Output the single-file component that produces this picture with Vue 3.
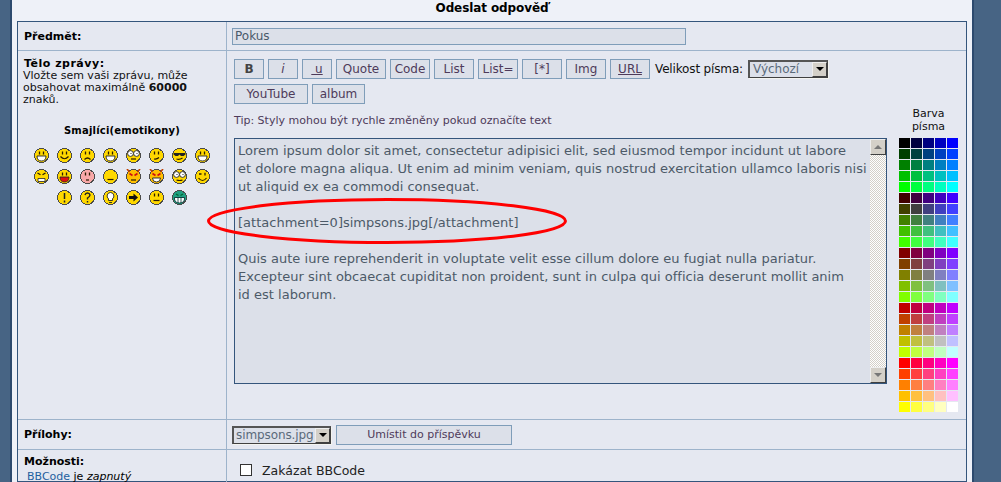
<script setup>
const smileys = [
  [{ f: '#ffd800', k: 'grin' }, { f: '#ffd800', k: 'smile' }, { f: '#ffd800', k: 'sad' }, { f: '#ffd800', k: 'open' }, { f: '#ffd800', k: 'roll' }, { f: '#ffd800', k: 'neutral' }, { f: '#ffd800', k: 'cool' }, { f: '#ffd800', k: 'laugh' }],
  [{ f: '#ffd800', k: 'mad' }, { f: '#ffd800', k: 'tongue' }, { f: '#f8a8a8', k: 'blush' }, { f: '#ffd800', k: 'meh' }, { f: '#ffc000', k: 'evil' }, { f: '#ffc000', k: 'evilgrin' }, { f: '#ffd800', k: 'geek' }, { f: '#ffd800', k: 'wink' }],
  [{ f: '#ffd800', k: 'excl' }, { f: '#ffd800', k: 'q' }, { f: '#ffd800', k: 'idea' }, { f: '#ffd800', k: 'arrow' }, { f: '#ffd800', k: 'flat' }, { f: '#1f9f80', k: 'green' }]
]
const eyes = ['grin', 'smile', 'sad', 'open', 'neutral', 'laugh', 'tongue', 'blush', 'flat']
const mouths = {
  smile: 'M3.500 8.500q4 4.500 8 0', sad: 'M4.500 11.500q3-3 6 0', neutral: 'M5 11q3 .500 5-1.500', meh: 'M4.500 10.500h6',
  flat: 'M4.500 10.500h6', roll: 'M5 11h5', cool: 'M4.500 11q3 1 6-1', wink: 'M3.500 9q4 5 8 0', blush: 'M6 11h3', geek: 'M4.500 11q3 1 6 0'
}
const palette = [
  ['#000000','#000040','#000080','#0000c0','#0000ff'],
  ['#004000','#004040','#004080','#0040c0','#0040ff'],
  ['#008000','#008040','#008080','#0080c0','#0080ff'],
  ['#00c000','#00c040','#00c080','#00c0c0','#00c0ff'],
  ['#00ff00','#00ff40','#00ff80','#00ffc0','#00ffff'],
  ['#400000','#400040','#400080','#4000c0','#4000ff'],
  ['#404000','#404040','#404080','#4040c0','#4040ff'],
  ['#408000','#408040','#408080','#4080c0','#4080ff'],
  ['#40c000','#40c040','#40c080','#40c0c0','#40c0ff'],
  ['#40ff00','#40ff40','#40ff80','#40ffc0','#40ffff'],
  ['#800000','#800040','#800080','#8000c0','#8000ff'],
  ['#804000','#804040','#804080','#8040c0','#8040ff'],
  ['#808000','#808040','#808080','#8080c0','#8080ff'],
  ['#80c000','#80c040','#80c080','#80c0c0','#80c0ff'],
  ['#80ff00','#80ff40','#80ff80','#80ffc0','#80ffff'],
  ['#c00000','#c00040','#c00080','#c000c0','#c000ff'],
  ['#c04000','#c04040','#c04080','#c040c0','#c040ff'],
  ['#c08000','#c08040','#c08080','#c080c0','#c080ff'],
  ['#c0c000','#c0c040','#c0c080','#c0c0c0','#c0c0ff'],
  ['#c0ff00','#c0ff40','#c0ff80','#c0ffc0','#c0ffff'],
  ['#ff0000','#ff0040','#ff0080','#ff00c0','#ff00ff'],
  ['#ff4000','#ff4040','#ff4080','#ff40c0','#ff40ff'],
  ['#ff8000','#ff8040','#ff8080','#ff80c0','#ff80ff'],
  ['#ffc000','#ffc040','#ffc080','#ffc0c0','#ffc0ff'],
  ['#ffff00','#ffff40','#ffff80','#ffffc0','#ffffff']
]
const row1 = [
  { t: 'B', c: 'bold w30' }, { t: 'i', c: 'ital w30' }, { t: '\u00a0u', c: 'und w30' },
  { t: 'Quote', c: 'w50' }, { t: 'Code', c: 'w40' }, { t: 'List', c: 'w40' },
  { t: 'List=', c: 'w40' }, { t: '[*]', c: 'w40' }, { t: 'Img', c: 'w40' }, { t: 'URL', c: 'und w40' }
]
</script>

<template>
  <div class="page">
    <div class="frame">
      <div class="heading">Odeslat odpověď</div>
      <div class="tbl">
        <div class="left subj"><b>Předmět:</b></div>
        <div class="right subj"><div class="subject-input">Pokus</div></div>

        <div class="left body-l">
          <div class="lbl wide"><b>Tělo zprávy:</b></div>
          <div class="hint">Vložte sem vaši zprávu, může<br>obsahovat maximálně <b>60000</b><br>znaků.</div>
          <div class="smile-title">Smajlíci(emotikony)</div>
          <div class="smiles">
            <div v-for="(r, i) in smileys" :key="i" class="smile-row">
              <svg v-for="s in r" :key="s.k" class="smile" viewBox="0 0 15 15" width="15" height="15">
                <circle cx="7.500" cy="7.500" r="7" :fill="s.f" stroke="#4a4a4a" stroke-width="1" shape-rendering="crispEdges" />
                <path v-if="eyes.includes(s.k)" d="M5.500 3.500v3M9.500 3.500v3" stroke="#2a1c00" stroke-width="1.300" fill="none" />
                <path v-if="mouths[s.k]" :d="mouths[s.k]" stroke="#2a1c00" stroke-width="1.200" fill="none" />
                <path v-if="s.k === 'grin' || s.k === 'open' || s.k === 'laugh'" d="M3 8h9q0 5-4.500 5T3 8z" fill="#fff" stroke="#222" stroke-width=".9" />
                <path v-if="s.k === 'tongue'" d="M3 8h9q0 5-4.500 5T3 8z" fill="#e01010" stroke="#222" stroke-width=".8" />
                <g v-if="s.k === 'mad'">
                  <path d="M3.500 4l3 1.800M11.500 4l-3 1.800" stroke="#2a1c00" stroke-width="1.300" />
                  <path d="M4 9.500h7v3H4z" fill="#fff" stroke="#222" stroke-width=".8" />
                </g>
                <g v-if="s.k === 'roll' || s.k === 'geek'">
                  <circle cx="4.500" cy="5.500" r="2.900" fill="#fff" stroke="#222" stroke-width=".9" />
                  <circle cx="10.500" cy="5.500" r="2.900" fill="#fff" stroke="#222" stroke-width=".9" />
                  <path d="M4.500 5.500h1M10.500 5.500h1" stroke="#222" stroke-width="1.200" />
                </g>
                <path v-if="s.k === 'cool'" d="M1.500 5h12v1.500l-2 1.500H9L7.500 6.500 6 8H3.500l-2-1.500z" fill="#222" />
                <path v-if="s.k === 'wink'" d="M4 5h2.500M10 3.800v2.700" stroke="#2a1c00" stroke-width="1.300" />
                <path v-if="s.k === 'evil' || s.k === 'evilgrin'" d="M1 0l2.500 3M14 0l-2.500 3" stroke="#c04000" stroke-width="1.600" />
                <path v-if="s.k === 'evil' || s.k === 'evilgrin'" d="M3.500 4.500l3 2M11.500 4.500l-3 2" stroke="#d01010" stroke-width="1.700" />
                <path v-if="s.k === 'evil'" d="M5 11h5" stroke="#2a1c00" stroke-width="1.200" />
                <path v-if="s.k === 'evilgrin'" d="M3.500 9h8q0 4-4 4t-4-4z" fill="#fff" stroke="#222" stroke-width=".9" />
                <path v-if="s.k === 'excl'" d="M7.500 3v6M7.500 10.500v2" stroke="#222" stroke-width="1.500" />
                <path v-if="s.k === 'q'" d="M5 5q.500-2 2.500-2t2.500 2q0 1.500-2.500 3v1.500M7.500 11v1.500" stroke="#222" stroke-width="1.400" fill="none" />
                <path v-if="s.k === 'idea'" d="M7.500 2.500a3.500 3.500 0 0 1 2 6.300v1.700h-4V8.800a3.500 3.500 0 0 1 2-6.300zM6 12.500h3" fill="#fff" stroke="#222" stroke-width=".9" />
                <path v-if="s.k === 'arrow'" d="M3 6h4.500V3.500l4.500 4-4.500 4V9H3z" fill="#111" />
                <g v-if="s.k === 'green'">
                  <path d="M4 4l2.500 1.500M11 4L8.500 5.500" stroke="#063" stroke-width="1.300" />
                  <path d="M2.500 7.500h10q.5 5.500-5 5.500t-5-5.500z" fill="#fff" stroke="#033" stroke-width=".9" />
                  <path d="M6 7.500V12.800M9 7.500V12.800" stroke="#033" stroke-width=".8" />
                </g>
              </svg>
            </div>
          </div>
        </div>

        <div class="right body-r">
          <div class="editor-top">
            <div class="toolbar">
              <div class="tb-row">
                <button v-for="b in row1" :key="b.t" class="btn" :class="b.c">{{ b.t }}</button>
                <span class="size-label">Velikost písma:</span>
                <div class="select size-sel"><span class="sel-text">Výchozí</span><span class="sel-arrow"><i></i></span></div>
              </div>
              <div class="tb-row second">
                <button class="btn w74">YouTube</button>
                <button class="btn w53">album</button>
              </div>
              <div class="tip">Tip: Styly mohou být rychle změněny pokud označíte text</div>
            </div>
          </div>
          <div class="editor-main">
            <div class="textarea">
              <div class="ta-text">
                <p>Lorem ipsum dolor sit amet, consectetur adipisici elit, sed eiusmod tempor incidunt ut labore<br>et dolore magna aliqua. Ut enim ad minim veniam, quis nostrud exercitation ullamco laboris nisi<br>ut aliquid ex ea commodi consequat.</p>
                <p>[attachment=0]simpsons.jpg[/attachment]</p>
                <p>Quis aute iure reprehenderit in voluptate velit esse cillum dolore eu fugiat nulla pariatur.<br>Excepteur sint obcaecat cupiditat non proident, sunt in culpa qui officia deserunt mollit anim<br>id est laborum.</p>
              </div>
              <div class="scrollbar">
                <span class="sb-btn"><i class="up"></i></span>
                <span class="sb-track"></span>
                <span class="sb-btn"><i class="down"></i></span>
              </div>
            </div>
            <div class="colors">
              <div class="color-title">Barva<br>písma</div>
              <div class="swatches">
                <div v-for="(r, i) in palette" :key="i" class="sw-row">
                  <span v-for="c in r" :key="c" class="sw" :style="{ background: c }"></span>
                </div>
              </div>
            </div>
          </div>
        </div>

        <div class="left att"><b>Přílohy:</b></div>
        <div class="right att att-r">
          <div class="select att-sel"><span class="sel-text">simpsons.jpg</span><span class="sel-arrow"><i></i></span></div>
          <button class="btn place">Umístit do příspěvku</button>
        </div>

        <div class="left opt">
          <div class="lbl"><b>Možnosti:</b></div>
          <div class="bb"><span class="link">BBCode</span> je <i>zapnutý</i></div>
        </div>
        <div class="right opt opt-r">
          <span class="check"></span><span class="check-label">Zakázat BBCode</span>
        </div>
      </div>
    </div>
    <svg class="ellipse" width="370" height="56" viewBox="0 0 370 56">
      <ellipse cx="183" cy="28" rx="178.500" ry="21.500" fill="none" stroke="#f00" stroke-width="3" />
    </svg>
  </div>
</template>

<style>
html, body { margin: 0; padding: 0; }
</style>

<style scoped>
.page {
  position: relative;
  width: 1001px;
  height: 482px;
  overflow: hidden;
  background: #476484;
  font-family: Verdana, "DejaVu Sans", sans-serif;
  color: #000;
}
.frame {
  position: absolute;
  left: 10px;
  top: 0;
  width: 964px;
  height: 482px;
  box-sizing: border-box;
  background: #eef1f8;
  border-left: 2px solid #2d4a6e;
  border-right: 2px solid #2d4a6e;
  padding: 0 5px;
}
.heading {
  height: 21px;
  text-align: center;
  font-size: 12px;
  font-weight: bold;
  line-height: 16px;
  letter-spacing: -.1px;
  color: #000;
}
.tbl {
  display: grid;
  grid-template-columns: 209px 739px;
  grid-template-rows: 29px 369px 30px 1fr;
  height: 461px;
  box-sizing: border-box;
  border: 1px solid #34557c;
  background: #e5e8f1;
}
.left, .right { box-sizing: border-box; border-bottom: 1px solid #9db3cb; }
.left { border-right: 1px solid #9db3cb; padding-left: 6px; }
.subj { display: flex; align-items: center; font-size: 11px; }
.right.subj { padding-left: 5px; }
.subject-input {
  width: 454px;
  height: 17px;
  box-sizing: border-box;
  border: 1px solid #7f9db9;
  background: #dce0e9;
  color: #4a5a6a;
  font-size: 12px;
  line-height: 15px;
  padding-left: 2px;
}
.lbl { font-size: 11px; line-height: 13px; }
.lbl.wide { letter-spacing: .5px; }
.body-l { padding-top: 6px; font-size: 10px; }
.hint { line-height: 12px; font-size: 11px; margin-left: -1px; color: #111; white-space: nowrap; }
.smile-title { margin-top: 18px; margin-left: -6px; text-align: center; font-size: 10px; font-weight: bold; letter-spacing: .2px; line-height: 13px; }
.smiles { margin-top: 11px; margin-left: -6px; display: flex; flex-direction: column; gap: 6px; }
.smile-row { display: flex; justify-content: center; gap: 8px; }
.smile { display: block; }
.body-r { display: flex; flex-direction: column; }
.editor-top { padding: 8px 0 0 7px; }
.tb-row { display: flex; align-items: center; gap: 4px; height: 20px; }
.tb-row.second { margin-top: 5px; }
.btn {
  box-sizing: border-box;
  height: 20px;
  padding: 0;
  border: 1px solid #7f9db9;
  background: #dce0e9;
  color: #4e3b5a;
  font-family: Verdana, "DejaVu Sans", sans-serif;
  font-size: 12px;
  line-height: 16px;
  text-align: center;
}
.bold { font-weight: bold; color: #444; }
.ital { font-style: italic; }
.und { text-decoration: underline; }
.w30 { width: 30px; }
.w40 { width: 40px; }
.w50 { width: 50px; }
.w74 { width: 74px; }
.w53 { width: 53px; }
.size-label { font-size: 12px; letter-spacing: -.15px; color: #111; margin-left: 1px; white-space: nowrap; }
.select {
  box-sizing: border-box;
  display: flex;
  border-top: 2px solid #555;
  border-left: 2px solid #555;
  border-right: 1px solid #404040;
  border-bottom: 1px solid #404040;
  box-shadow: 1px 1px 0 #f4f4f0;
  background: #dce0e9;
  height: 18px;
}
.sel-text { flex: 1; font-size: 12px; color: #5a6a7a; line-height: 14px; padding-left: 3px; white-space: nowrap; }
.att-sel .sel-text { letter-spacing: -.1px; padding-left: 2px; }
.sel-arrow {
  box-sizing: border-box;
  width: 15px;
  background: #d4d0c8;
  border: 1px solid;
  border-color: #eee #404040 #404040 #eee;
  display: flex;
  align-items: center;
  justify-content: center;
}
.sel-arrow i { width: 0; height: 0; border: 4px solid transparent; border-top-color: #000; border-bottom-width: 0; }
.size-sel { width: 80px; margin-left: 1px; margin-top: -1px; }
.tip { margin-top: 10px; font-size: 11px; line-height: 13px; color: #4e3b5a; }
.editor-main { display: flex; padding-left: 7px; margin-top: 11px; }
.textarea {
  box-sizing: border-box;
  width: 653px;
  height: 246px;
  border: 1px solid #34557c;
  background: #dce0e9;
  display: flex;
}
.ta-text {
  flex: 1;
  padding: 3px 0 0 3px;
  font-size: 13px;
  line-height: 18px;
  letter-spacing: .01px;
  color: #4c5a68;
  white-space: nowrap;
  overflow: hidden;
}
.ta-text p { margin: 0 0 18px; }
.scrollbar { width: 16px; display: flex; flex-direction: column; }
.sb-btn {
  box-sizing: border-box;
  height: 16px;
  background: #d4d0c8;
  border: 1px solid;
  border-color: #eee #404040 #404040 #eee;
  display: flex;
  align-items: center;
  justify-content: center;
}
.sb-btn .up { width: 0; height: 0; border: 4px solid transparent; border-bottom-color: #777; border-top-width: 0; }
.sb-btn .down { width: 0; height: 0; border: 4px solid transparent; border-top-color: #777; border-bottom-width: 0; }
.sb-track {
  flex: 1;
  background: repeating-conic-gradient(#d4d0c8 0 25%, #fff 0 50%) 0 0 / 2px 2px;
}
.colors { margin-left: 12px; width: 59px; margin-top: -31px; }
.color-title { font-size: 11px; line-height: 13px; text-align: center; color: #111; }
.swatches { margin-top: 5px; }
.sw-row { display: flex; gap: 1px; margin-bottom: 1px; }
.sw { display: block; width: 11px; height: 10px; }
.att { display: flex; align-items: center; font-size: 11px; }
.att-r { padding-left: 5px; gap: 5px; }
.att-sel { width: 99px; height: 18px; }
.place { width: 176px; height: 20px; color: #4e3b5a; font-size: 11px; }
.opt { border-bottom: none; }
.opt .lbl { padding-top: 5px; }
.bb { font-size: 11px; margin-top: 3px; line-height: 12px; margin-left: 3px; white-space: nowrap; }
.link { color: #1f5f9f; }
.opt-r { display: flex; align-items: flex-start; padding: 13px 0 0 13px; }
.check { width: 12px; height: 12px; box-sizing: border-box; background: #fff; border: 1px solid #333; margin-top: 1px; flex: none; }
.check-label { font-size: 12.500px; margin-left: 10px; color: #222; }
.ellipse { position: absolute; left: 204px; top: 193px; }
</style>
